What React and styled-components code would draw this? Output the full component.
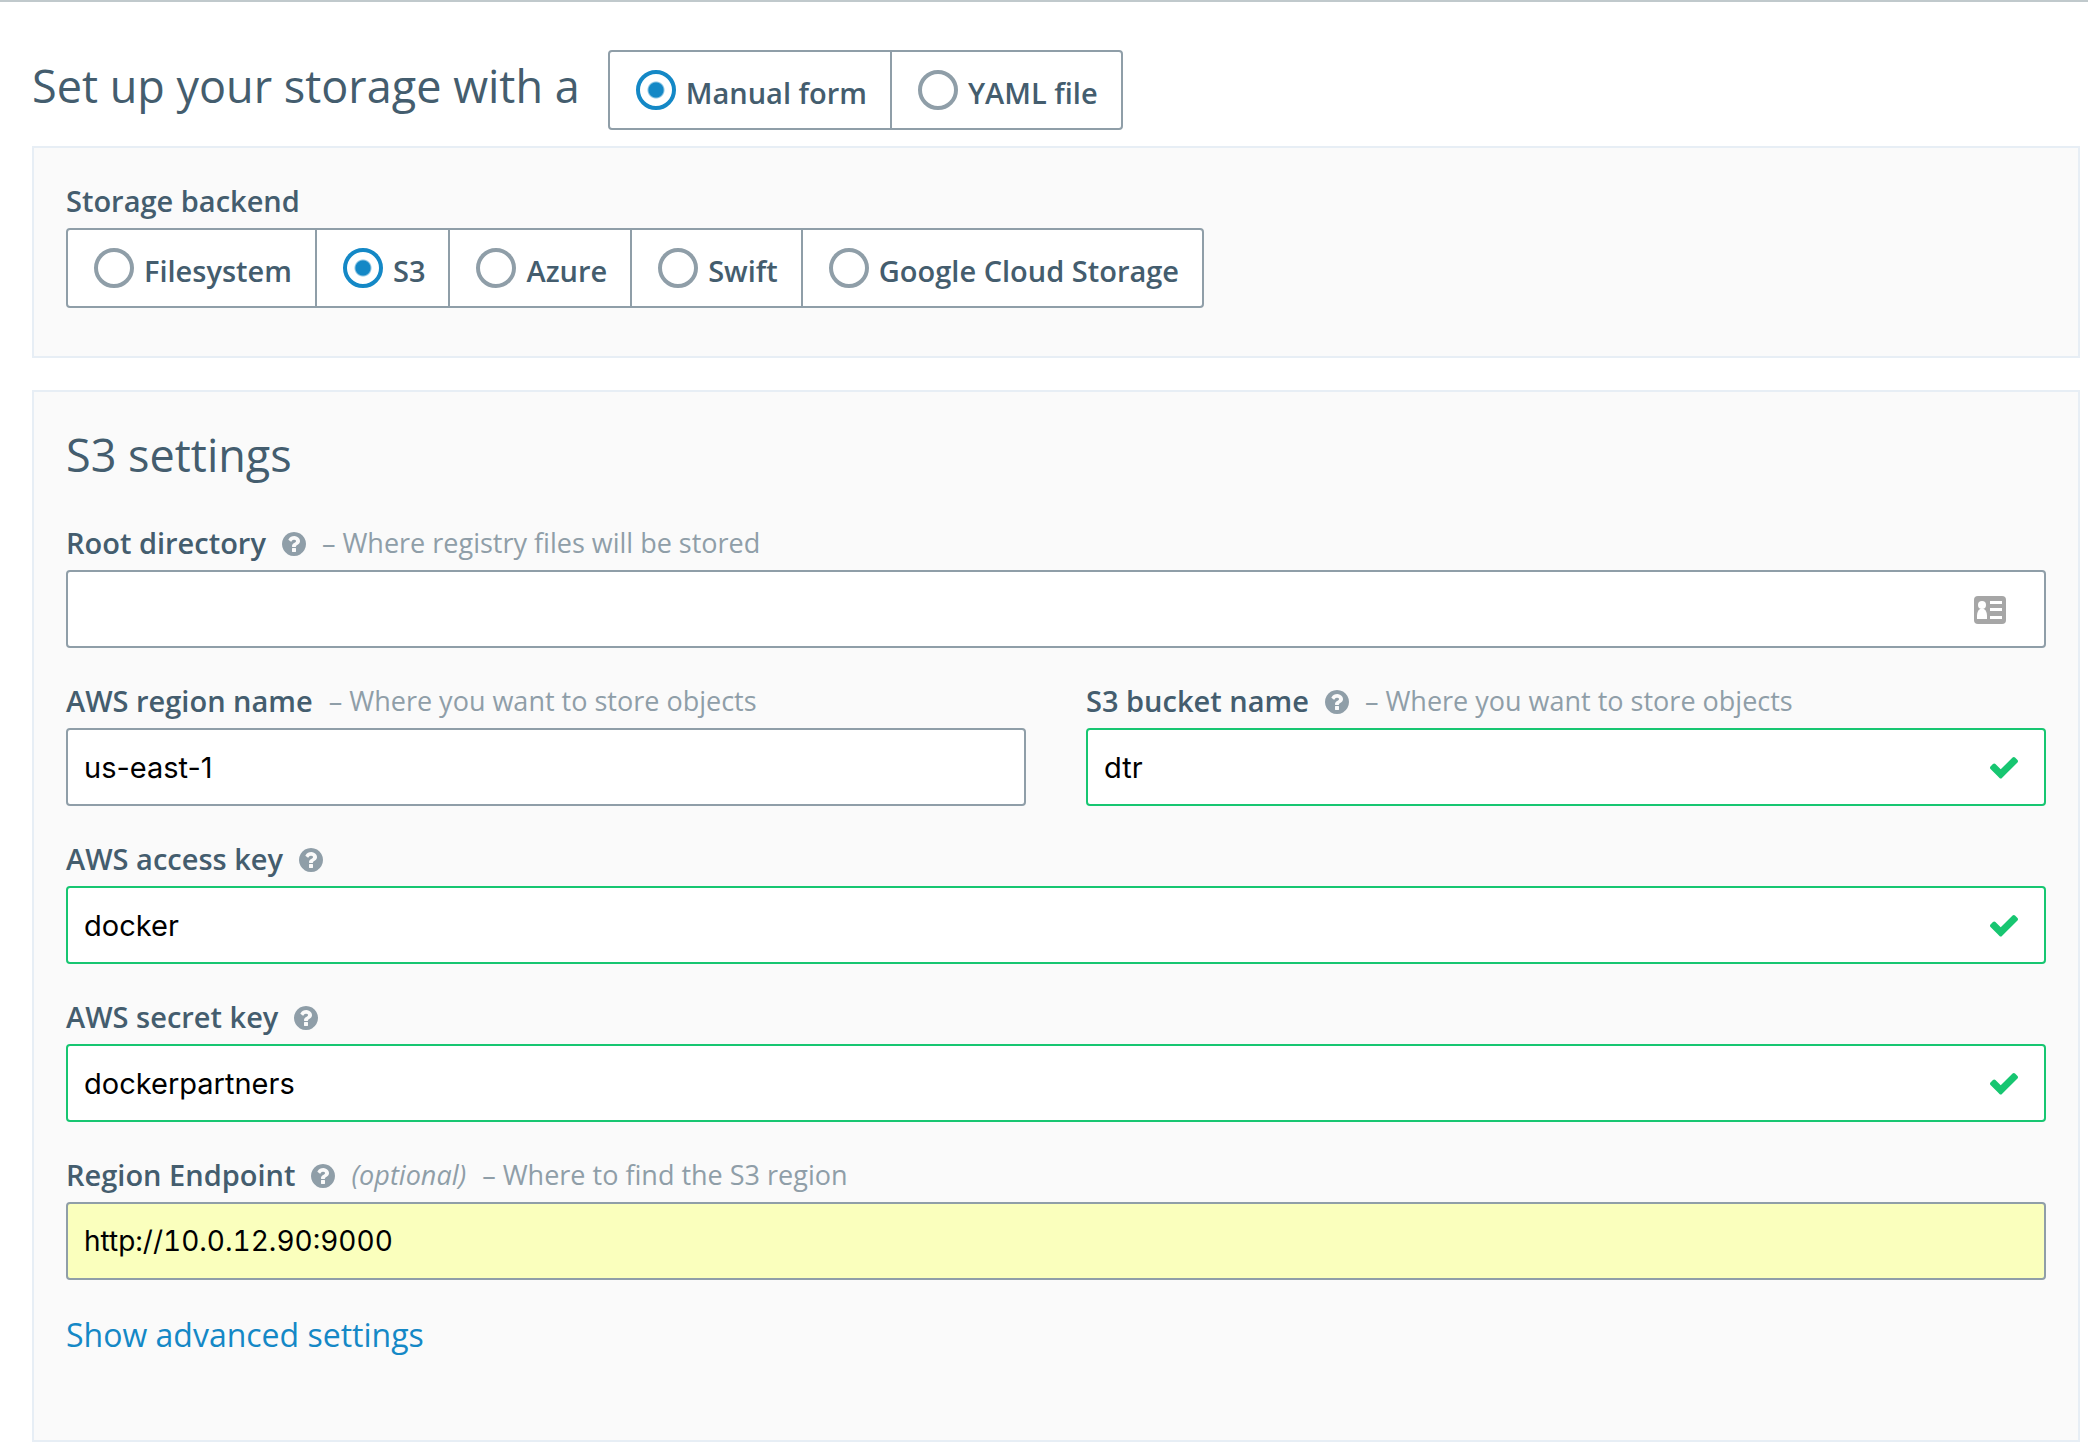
import React, { useId, useState } from "react";
import styled, { createGlobalStyle } from "styled-components";

const color = {
  text: "#445d6e",
  muted: "#8f9ea8",
  blue: "#1488c6",
  green: "#17c671",
  panel: "#fafafa",
  panelBorder: "#e7eef5",
  rule: "#c0c9cc",
  autofill: "#faffbd",
};

const GlobalStyle = createGlobalStyle`
  *, *::before, *::after { box-sizing: border-box; }
  body {
    margin: 0;
    background: #fff;
    color: ${color.text};
    font-family: "Open Sans", "Noto Sans", sans-serif;
    font-size: 29px;
    line-height: 42px;
  }
`;

const Page = styled.main`
  display: flex;
  flex-direction: column;
  gap: 32px;
  padding: 48px 8px 10px 32px;
  border-top: 2px solid ${color.rule};
`;

const Intro = styled.section`
  display: flex;
  flex-direction: column;
  gap: 16px;
`;

const TitleRow = styled.header`
  display: flex;
  align-items: flex-start;
  gap: 28px;
`;

const Title = styled.h1`
  margin: 0;
  font-size: 45px;
  font-weight: 400;
  line-height: 72px;
`;

const Panel = styled.section`
  padding: 32px 32px ${(p) => (p.$tall ? 82 : 48)}px;
  background: ${color.panel};
  border: 2px solid ${color.panelBorder};
`;

const PanelTitle = styled.h2`
  margin: 0 0 36px;
  font-size: 45px;
  font-weight: 400;
  line-height: 62px;
`;

const Group = styled.fieldset`
  margin: 0;
  padding: 0;
  border: 0;
  min-width: 0;
`;

const Legend = styled.legend`
  margin-bottom: 6px;
  padding: 0;
  font-weight: 600;
`;

const Segments = styled.div`
  display: inline-flex;
  vertical-align: top;
  background: #fff;
  border: 2px solid ${color.muted};
  border-radius: 4px;
`;

const Segment = styled.label`
  display: flex;
  align-items: flex-start;
  gap: 10px;
  padding: 18px 23px 12px 26px;
  font-weight: 600;
  line-height: 46px;
  cursor: pointer;

  & + & {
    border-left: 2px solid ${color.muted};
  }
`;

const Radio = styled.input`
  appearance: none;
  flex: none;
  width: 40px;
  height: 40px;
  margin: 0;
  border: 4px solid ${color.muted};
  border-radius: 50%;
  background: #fff;

  &:checked {
    border-color: ${color.blue};
    background: radial-gradient(circle, ${color.blue} 7px, #fff 9px);
  }
`;

const Form = styled.form`
  display: grid;
  grid-template-columns: 1fr 1fr;
  gap: 32px 60px;
`;

const FieldBox = styled.div`
  display: flex;
  flex-direction: column;
  gap: 6px;
  min-width: 0;
  grid-column: ${(p) => (p.$half ? "auto" : "1 / -1")};
`;

const LabelRow = styled.div`
  display: flex;
  align-items: center;
  gap: 16px;
`;

const Label = styled.label`
  font-weight: 600;
`;

const HelpIcon = styled.svg`
  flex: none;
  width: 24px;
  height: 24px;
  margin-top: 2px;
  fill: ${color.muted};
`;

const Hint = styled.span`
  color: ${color.muted};
  font-size: 27px;
`;

const Optional = styled.em`
  color: ${color.muted};
  font-size: 27px;
`;

const Control = styled.div`
  position: relative;
`;

const TextInput = styled.input`
  display: block;
  width: 100%;
  height: 78px;
  padding: 0 80px 0 16px;
  border: 2px solid ${(p) => (p.$valid ? color.green : color.muted)};
  border-radius: 4px;
  background: ${(p) => (p.$filled ? color.autofill : "#fff")};
  color: #000;
  font-family: Inter, "Liberation Sans", sans-serif;
  font-size: ${(p) => (p.$filled ? 28 : 29)}px;
  font-variant-numeric: ${(p) => (p.$filled ? "tabular-nums" : "normal")};
  outline: none;
`;

const Adornment = styled.svg`
  position: absolute;
  top: 2px;
  bottom: 0;
  right: ${(p) => p.$right}px;
  width: ${(p) => p.$width}px;
  margin: auto 0;
  pointer-events: none;
`;

const Advanced = styled.a`
  grid-column: 1 / -1;
  justify-self: start;
  color: ${color.blue};
  font-size: 32px;
  line-height: 46px;
  text-decoration: none;
`;

function Help() {
  return (
    <HelpIcon viewBox="0 0 1536 1536" role="img" aria-label="Help">
      <path d="M896 1248v-192q0-14-9-23t-23-9H672q-14 0-23 9t-9 23v192q0 14 9 23t23 9h192q14 0 23-9t9-23zm256-672q0-88-55.500-163T958 297t-170-41q-243 0-371 213-15 24 8 42l132 100q7 6 19 6 16 0 25-12 53-68 86-92 34-24 86-24 48 0 85.500 26t37.500 59q0 38-20 61t-68 45q-63 28-115.500 86.500T640 892v36q0 14 9 23t23 9h192q14 0 23-9t9-23q0-19 21.500-49.500T972 829q32-18 49-28.500t46-35 44.500-48 28-60.500 12.500-81zm384 192q0 209-103 385.500T1153.500 1433 768 1536t-385.500-103T103 1153.500 0 768t103-385.500T382.500 103 768 0t385.500 103T1433 382.500 1536 768z" />
    </HelpIcon>
  );
}

function Check() {
  return (
    <Adornment viewBox="121 334 1550 1188" $width={28} $right={28} fill={color.green} aria-hidden="true">
      <path d="M1671 566q0 40-28 68l-724 724-136 136q-28 28-68 28t-68-28l-136-136-362-362q-28-28-28-68t28-68l136-136q28-28 68-28t68 28l294 295 656-657q28-28 68-28t68 28l136 136q28 28 28 68z" />
    </Adornment>
  );
}

function ContactCard() {
  return (
    <Adornment viewBox="0 0 32 28" $width={32} $right={40} aria-hidden="true">
      <rect width="32" height="28" rx="4" fill="#a6a6a6" />
      <g fill="#fff">
        <circle cx="8" cy="9" r="4" />
        <path d="M3 23v-3q0-5 3-7h4q3 2 3 7v3z" />
        <path d="M16 5h12v3H16zM16 12h12v3H16zM16 20h12v3H16z" />
      </g>
    </Adornment>
  );
}

function RadioGroup({ name, options, value, onChange, label }) {
  return (
    <Segments role="radiogroup" aria-label={label}>
      {options.map((option) => (
        <Segment key={option}>
          <Radio
            type="radio"
            name={name}
            checked={value === option}
            onChange={() => onChange(option)}
          />
          {option}
        </Segment>
      ))}
    </Segments>
  );
}

function Field({ label, hint, help, optional, half, value = "", valid, filled, card }) {
  const id = useId();
  const [text, setText] = useState(value);
  return (
    <FieldBox $half={half}>
      <LabelRow>
        <Label htmlFor={id}>{label}</Label>
        {help && <Help />}
        {optional && <Optional>(optional)</Optional>}
        {hint && <Hint>– {hint}</Hint>}
      </LabelRow>
      <Control>
        <TextInput
          id={id}
          type="text"
          value={text}
          onChange={(e) => setText(e.target.value)}
          $valid={valid}
          $filled={filled}
        />
        {valid && <Check />}
        {card && <ContactCard />}
      </Control>
    </FieldBox>
  );
}

export default function App() {
  const [method, setMethod] = useState("Manual form");
  const [backend, setBackend] = useState("S3");

  return (
    <>
      <GlobalStyle />
      <Page>
        <Intro>
          <TitleRow>
            <Title>Set up your storage with a</Title>
            <RadioGroup
              name="method"
              label="Setup method"
              options={["Manual form", "YAML file"]}
              value={method}
              onChange={setMethod}
            />
          </TitleRow>
          <Panel>
            <Group>
              <Legend>Storage backend</Legend>
              <RadioGroup
                name="backend"
                label="Storage backend"
                options={["Filesystem", "S3", "Azure", "Swift", "Google Cloud Storage"]}
                value={backend}
                onChange={setBackend}
              />
            </Group>
          </Panel>
        </Intro>
        <Panel $tall>
          <PanelTitle>S3 settings</PanelTitle>
          <Form>
            <Field label="Root directory" help hint="Where registry files will be stored" card />
            <Field label="AWS region name" hint="Where you want to store objects" value="us-east-1" half />
            <Field label="S3 bucket name" help hint="Where you want to store objects" value="dtr" valid half />
            <Field label="AWS access key" help value="docker" valid />
            <Field label="AWS secret key" help value="dockerpartners" valid />
            <Field
              label="Region Endpoint"
              help
              optional
              hint="Where to find the S3 region"
              value="http://10.0.12.90:9000"
              filled
            />
            <Advanced href="#advanced">Show advanced settings</Advanced>
          </Form>
        </Panel>
      </Page>
    </>
  );
}
